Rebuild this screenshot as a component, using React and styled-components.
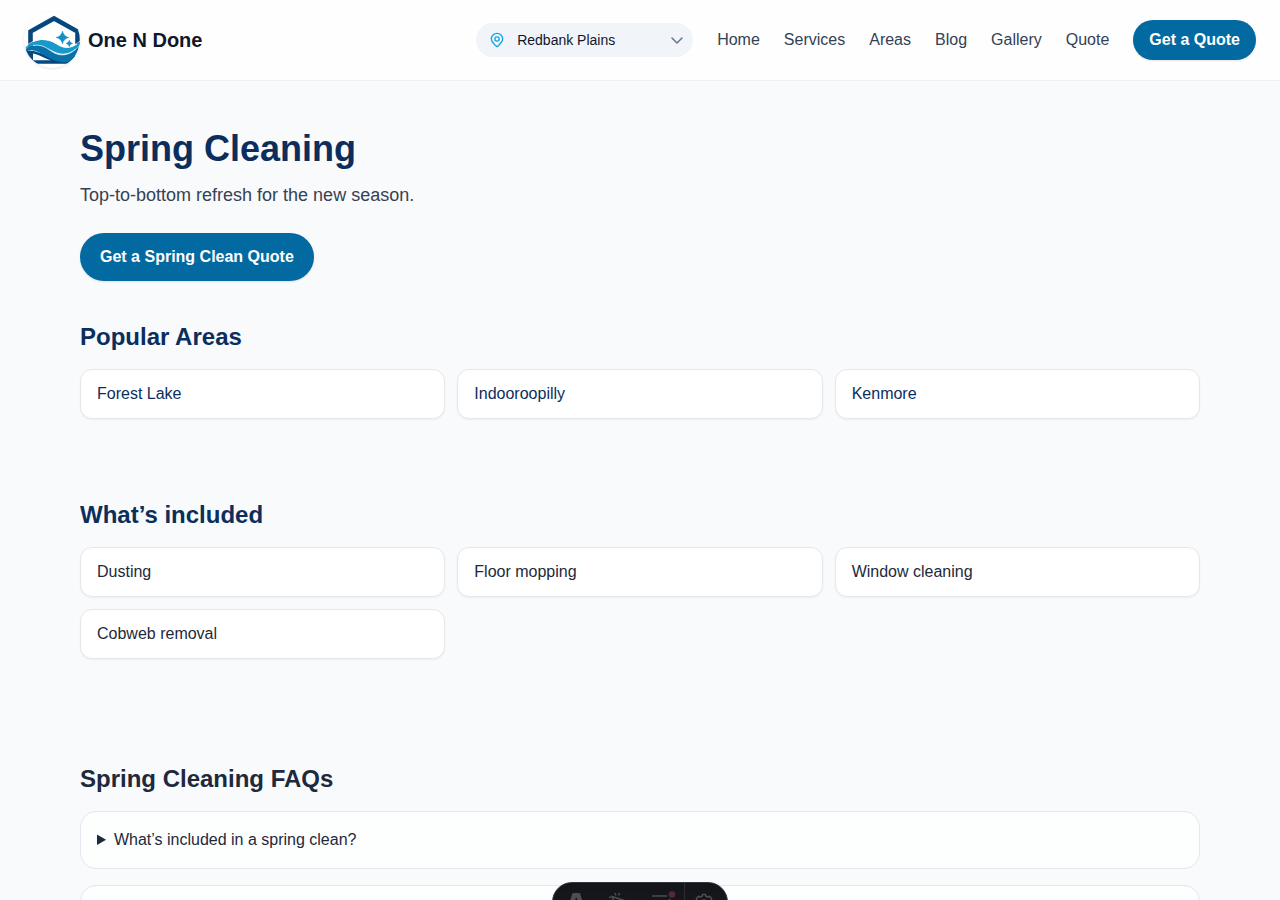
import React from "react";
import styled, { createGlobalStyle } from "styled-components";

const GlobalStyle = createGlobalStyle`
  *, *::before, *::after { box-sizing: border-box; }
  body {
    margin: 0;
    background: #f8fafc;
    color: #1e293b;
    font-family: "Liberation Sans", Arial, sans-serif;
    font-size: 16px;
    line-height: 24px;
  }
  h1, h2, p, ul { margin: 0; padding: 0; }
  ul { list-style: none; }
  a { color: inherit; text-decoration: none; }
`;

const Page = styled.div`
  height: 100vh;
  overflow: hidden;
`;

const Header = styled.header`
  display: flex;
  align-items: center;
  justify-content: space-between;
  padding: 12px 24px;
  background: #fefefe;
  border-bottom: 1px solid #eef2f7;
`;

const Brand = styled.a`
  display: flex;
  align-items: center;
  gap: 8px;
  color: #0f172a;
  font-size: 20px;
  font-weight: 700;
  line-height: 28px;
`;

const LogoFrame = styled.span`
  display: block;
  width: 56px;
  height: 56px;
  overflow: hidden;
  border-radius: 50%;
  background: #fff;
  box-shadow: 0 1px 3px rgba(0, 0, 0, 0.1);
  svg { display: block; }
`;

const Nav = styled.nav`
  display: flex;
  align-items: center;
  gap: 24px;
  color: #334155;
`;

const AreaPicker = styled.div`
  display: grid;
  align-items: center;
  width: 217px;
  border-radius: 17px;
  background: #f1f5f9;
  > * { grid-area: 1 / 1; }
  svg { pointer-events: none; }
`;

const AreaSelect = styled.select`
  appearance: none;
  width: 100%;
  height: 34px;
  padding: 0 36px 0 41px;
  border: 0;
  border-radius: 17px;
  background: transparent;
  color: #0f172a;
  font: 14px/20px "Liberation Sans", Arial, sans-serif;
`;

const PinIcon = styled.svg`
  margin-left: 13px;
  color: #0ea5e9;
`;

const ChevronIcon = styled.svg`
  justify-self: end;
  margin-right: 8px;
  color: #64748b;
`;

const ButtonLink = styled.a`
  display: inline-block;
  padding: ${(p) => (p.$large ? "12px 20px" : "8px 16px")};
  border-radius: 24px;
  background: #0369a1;
  color: #fff;
  font-weight: 700;
  box-shadow: 0 1px 2px rgba(0, 0, 0, 0.1);
`;

const Main = styled.main`
  max-width: 1152px;
  margin: 0 auto;
  padding: 48px 16px;
`;

const Title = styled.h1`
  color: #0b2e5c;
  font-size: 36px;
  line-height: 40px;
`;

const Lead = styled.p`
  margin: 12px 0 24px;
  color: #374151;
  font-size: 18px;
  line-height: 28px;
`;

const Section = styled.section`
  margin-top: ${(p) => p.$space}px;
`;

const SectionTitle = styled.h2`
  margin-bottom: 16px;
  color: ${(p) => (p.$dark ? "#1e293b" : "#0b2e5c")};
  font-size: 24px;
  line-height: 32px;
`;

const CardGrid = styled.ul`
  display: grid;
  grid-template-columns: repeat(3, 1fr);
  gap: 12px;
`;

const Card = styled.li`
  padding: 12px 16px;
  border: 1px solid #e5e7eb;
  border-radius: 12px;
  background: #fff;
  color: ${(p) => (p.$navy ? "#0b2e5c" : "#1e293b")};
  box-shadow: 0 1px 2px rgba(0, 0, 0, 0.05);
`;

const CardLink = styled.a`
  display: block;
`;

const FaqList = styled.div`
  display: grid;
  gap: 16px;
`;

const Faq = styled.details`
  padding: 16px;
  border: 1px solid #e2e8f0;
  border-radius: 16px;
  background: #fdfefe;
`;

const Question = styled.summary`
  min-height: 24px;
`;

const DevBar = styled.div`
  position: fixed;
  bottom: -22px;
  left: 50%;
  display: flex;
  width: 176px;
  height: 40px;
  transform: translateX(-50%);
  overflow: hidden;
  border: 1px solid #343841;
  border-radius: 20px;
  background: linear-gradient(180deg, #13151a 0%, #1b1722 100%);
`;

const DevButton = styled.button`
  display: flex;
  flex: ${(p) => (p.$divided ? "0 0 43px" : "1")};
  align-items: center;
  justify-content: center;
  padding: 0;
  border: 0;
  border-left: ${(p) => (p.$divided ? "1px solid #2b2e36" : "0")};
  background: transparent;
  color: #4c4e54;
  svg { overflow: visible; }
`;

function Logo() {
  return (
    <svg width="56" height="56" viewBox="0 0 56 56" aria-hidden="true">
      <path d="M6.500 36V19.500L30 6.500L53.500 19.500V32" fill="none" stroke="#06477f" strokeWidth="4.600" />
      <path d="M1.500 38L10 39L32 46L52 44L44 51.700H13C8 49 3.500 44 1.500 38Z" fill="#06477f" />
      <path d="M9 41.500C15 42.500 20 46 27 48.300H9Z" fill="#fff" />
      <path d="M1.500 37C9 31 19 32 26 38C34 44 44 46 55 34C53 43 49 48 44 50C31 52 21 43 13 39.500C8 37.500 5 37.500 2 39Z" fill="#0871a8" />
      <path d="M1.500 35.500C11 26 23 26.500 32 32C41 38 48 37 56 30V33C47 43 37 44 27 38C18 32 10 31 2 36.500Z" fill="#159acb" />
      <path d="M1.500 34.500C11 25.500 23 26 32 31.200C41 37 48 36 56 29M9 33.500C17 32 22 35.500 27 39C34 44 43 45 52 37" fill="none" stroke="#fff" strokeWidth="0.700" />
      <path d="M38.500 19Q39.600 24.400 45 25.500Q39.600 26.600 38.500 32Q37.400 26.600 32 25.500Q37.400 24.400 38.500 19ZM45.300 28.200Q45.900 30.900 48.600 31.500Q45.900 32.100 45.300 34.800Q44.700 32.100 42 31.500Q44.700 30.900 45.300 28.200Z" fill="#168fc4" stroke="#168fc4" strokeWidth="0.400" />
    </svg>
  );
}

const links = ["Home", "Services", "Areas", "Blog", "Gallery", "Quote"];
const areas = ["Forest Lake", "Indooroopilly", "Kenmore"];
const tasks = ["Dusting", "Floor mopping", "Window cleaning", "Cobweb removal"];

export default function App() {
  return (
    <Page>
      <GlobalStyle />
      <Header>
        <Brand href="#">
          <LogoFrame><Logo /></LogoFrame>
          One N Done
        </Brand>
        <Nav>
          <AreaPicker>
            <AreaSelect aria-label="Area" defaultValue="Redbank Plains">
              <option>Redbank Plains</option>
            </AreaSelect>
            <PinIcon width="16" height="16" viewBox="0 0 24 24" fill="none" stroke="currentColor" strokeWidth="2" aria-hidden="true">
              <path d="M12 22s-2-1.200-4-3.500C5.500 16 3.500 13 3.500 10.500a8.500 8.500 0 0 1 17 0C20.500 13 18.500 16 16 18.500C14 20.800 12 22 12 22Z" />
              <circle cx="12" cy="10.500" r="3.200" />
            </PinIcon>
            <ChevronIcon width="16" height="16" viewBox="0 0 16 16" fill="none" stroke="currentColor" strokeWidth="1.500" strokeLinecap="round" strokeLinejoin="round" aria-hidden="true">
              <path d="M3 6l5 5 5-5" />
            </ChevronIcon>
          </AreaPicker>
          {links.map((name) => <a key={name} href="#">{name}</a>)}
          <ButtonLink href="#">Get a Quote</ButtonLink>
        </Nav>
      </Header>
      <Main>
        <Title>Spring Cleaning</Title>
        <Lead>Top-to-bottom refresh for the new season.</Lead>
        <ButtonLink $large href="#">Get a Spring Clean Quote</ButtonLink>
        <Section $space={40}>
          <SectionTitle>Popular Areas</SectionTitle>
          <CardGrid>
            {areas.map((name) => <Card $navy key={name}><CardLink href="#">{name}</CardLink></Card>)}
          </CardGrid>
        </Section>
        <Section $space={80}>
          <SectionTitle>What’s included</SectionTitle>
          <CardGrid>
            {tasks.map((name) => <Card key={name}>{name}</Card>)}
          </CardGrid>
        </Section>
        <Section $space={104}>
          <SectionTitle $dark>Spring Cleaning FAQs</SectionTitle>
          <FaqList>
            <Faq><Question>What’s included in a spring clean?</Question></Faq>
            <Faq><Question /></Faq>
          </FaqList>
        </Section>
      </Main>
      <DevBar>
        <DevButton aria-label="Menu">
          <svg width="20" height="20" viewBox="0 0 20 20" fill="currentColor">
            <path d="M8.500 1h5.500q1 0 1.300 1L19 15q-3-1.200-5-1.400L11.800 6q-.5-1.200-1 0L8.500 13.600Q6 13.800 3 15L7.200 2q.3-1 1.300-1ZM7 15q4 2 8 0q0 3-4 5q-4-2-4-5Z" />
          </svg>
        </DevButton>
        <DevButton aria-label="Inspect">
          <svg width="20" height="20" viewBox="0 0 20 20" fill="none" stroke="currentColor" strokeWidth="1.500">
            <path d="M3 4.500L15 8.500L10 11L7.500 16ZM6 1l1 2.500M10.500 1l-1 2.500M0 5l2 .5M0 10l2-1" />
          </svg>
        </DevButton>
        <DevButton aria-label="Audit">
          <svg width="26" height="20" viewBox="0 0 26 20" fill="none" stroke="currentColor" strokeWidth="1.500">
            <path d="M3 4h15M3 10h9M3 16h9M14 11l3 3 4-7" />
            <circle cx="23" cy="2.500" r="3.300" fill="#512a3b" stroke="none" />
          </svg>
        </DevButton>
        <DevButton $divided aria-label="Settings">
          <svg width="24" height="20" viewBox="0 0 24 20" fill="none" stroke="currentColor" strokeWidth="1.500" strokeLinejoin="round">
            <path d="M8.500 2.500h3l.5 1.800 1.800.8 1.700-.8 2.200 2.200-.8 1.700.6 1.800 1.500.5v3l-1.500.5-1 2-2 2h-9l-2-2-1-2L1 13.500v-3L2.500 10l.6-1.800L2.300 6.500l2.200-2.200 1.700.8L8 4.300Z" />
            <circle cx="10" cy="11.500" r="3.500" />
          </svg>
        </DevButton>
      </DevBar>
    </Page>
  );
}
